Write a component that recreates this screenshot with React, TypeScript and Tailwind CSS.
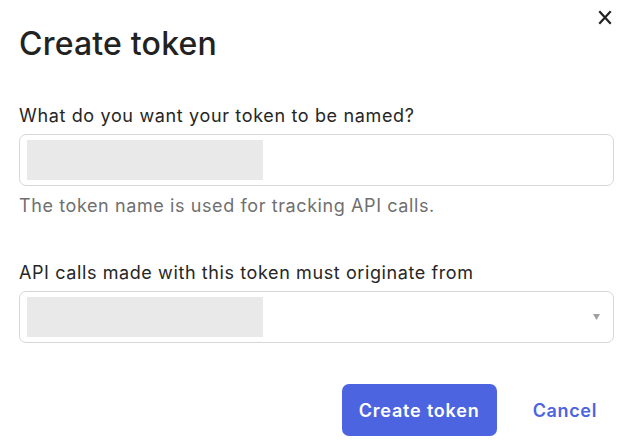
import React from 'react';

// Create token dialog

export default function App() {
    return (
        <div className="w-[631px] h-[448px] bg-white relative overflow-hidden" style={{ fontFamily: 'Inter, "Noto Sans", sans-serif' }}>
            <button className="absolute left-[597px] top-[9px] w-[16px] h-[16px] flex items-center justify-center text-[#222]" aria-label="Close">
                <XIcon />
            </button>

            <div className="pl-[19px] pr-[17px] pt-[24px]">
                <h1 className="text-[32px] leading-[40px] font-medium text-[#222] tracking-[0.2px]">Create token</h1>

                <div className="mt-[40px]">
                    <label className="block text-[18px] leading-[24px] tracking-[0.65px] text-[#262626]">
                        What do you want your token to be named?
                    </label>
                    <div className="mt-[6px] h-[52px] border border-[#d6d6d6] rounded-[7px] flex items-center px-[7px]">
                        <div className="w-[236px] h-[40px] bg-[#e9e9e9]" />
                    </div>
                    <p className="mt-[8px] text-[18px] leading-[24px] tracking-[0.6px] text-[#6f6f6f]">
                        The token name is used for tracking API calls.
                    </p>
                </div>

                <div className="mt-[43px]">
                    <label className="block text-[18px] leading-[24px] tracking-[0.6px] text-[#262626]">
                        API calls made with this token must originate from
                    </label>
                    <div className="mt-[6px] h-[52px] border border-[#d6d6d6] rounded-[7px] flex items-center justify-between pl-[7px] pr-[13px]">
                        <div className="w-[236px] h-[40px] bg-[#e9e9e9]" />
                        <svg width="7" height="6" viewBox="0 0 7 6" className="text-[#a0a0a0]">
                            <path d="M0 0h7L3.5 6z" fill="currentColor" />
                        </svg>
                    </div>
                </div>

                <div className="mt-[41px] flex items-center justify-end gap-[36px] pr-[17px]">
                    <button className="h-[52px] w-[155px] rounded-[7px] bg-[#4c64e0] text-white text-[18px] tracking-[0.8px] font-semibold">
                        Create token
                    </button>
                    <button className="text-[18px] tracking-[0.65px] font-semibold text-[#4c64e0]">Cancel</button>
                </div>
            </div>
        </div>
    );
}

function XIcon() {
    return (
        <svg width="14" height="15" viewBox="0 0 14 15" fill="none" stroke="currentColor" strokeWidth={2.2} strokeLinecap="square">
            <path d="M2 2l10 11M12 2L2 13" />
        </svg>
    );
}
